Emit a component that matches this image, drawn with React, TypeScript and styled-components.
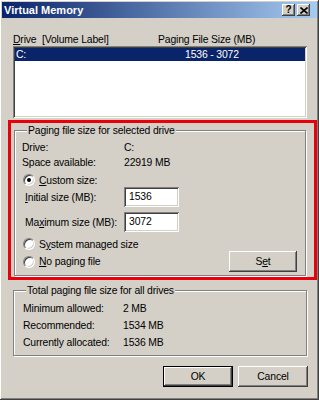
import { FC, ReactNode } from 'react';
import styled, { createGlobalStyle } from 'styled-components';

const GlobalStyle = createGlobalStyle`
  html, body {
    margin: 0;
    padding: 0;
    background: #d4d0c8;
  }
  * {
    box-sizing: border-box;
  }
`;

const face = '#d4d0c8';

const Window = styled.div`
  width: 319px;
  height: 400px;
  padding: 2px;
  background: ${face};
  font-family: 'Liberation Sans', Arial, sans-serif;
  font-size: 10.4px;
  letter-spacing: -0.15px;
  white-space: nowrap;
  color: #000;
  box-shadow: inset -1px -1px 0 #404040, inset 1px 1px 0 #ffffff,
    inset -2px -2px 0 #808080;
  display: flex;
  flex-direction: column;
  overflow: hidden;
`;

const TitleBar = styled.div`
  height: 16px;
  display: flex;
  align-items: center;
  padding: 0 7px 0 2px;
  background: linear-gradient(to right, #0a246a, #a6caf0);
`;

const Title = styled.div`
  flex: 1;
  color: #fff;
  font-weight: bold;
  font-size: 11px;
  letter-spacing: 0;
`;

const CaptionButtons = styled.div`
  display: flex;
  gap: 2px;
`;

const CaptionButton = styled.div`
  width: 13px;
  height: 12px;
  background: ${face};
  box-shadow: inset -1px -1px 0 #404040, inset 1px 1px 0 #ffffff,
    inset -2px -2px 0 #808080;
  display: flex;
  align-items: center;
  justify-content: center;
  font-weight: bold;
  font-size: 10px;
  line-height: 1;
`;

const Body = styled.div`
  padding: 16px 10px 0 11px;
  display: flex;
  flex-direction: column;
`;

const HeaderRow = styled.div`
  display: grid;
  grid-template-columns: 145px 1fr;
  height: 12px;
  line-height: 12px;
`;

const ListBox = styled.div`
  height: 72px;
  background: #fff;
  padding: 2px;
  box-shadow: inset 1px 1px 0 #808080, inset -1px -1px 0 #ffffff,
    inset 2px 2px 0 #404040, inset -2px -2px 0 ${face};
`;

const ListRow = styled.div<{ selected?: boolean }>`
  display: grid;
  grid-template-columns: 143px 1fr;
  height: 13px;
  line-height: 13px;
  padding-left: 1px;
  background: ${p => (p.selected ? '#0a246a' : 'transparent')};
  color: ${p => (p.selected ? '#fff' : '#000')};
`;

const ListValue = styled.span`
  padding-left: 26px;
`;

const Highlight = styled.div`
  margin: 2px -10px 0 -5px;
  height: 160px;
  border: 3px solid #e8000a;
  padding: 1px 8px 0 3px;
`;

const Group = styled.fieldset<{ height: number }>`
  margin: 0;
  height: ${p => p.height}px;
  border: 1px solid #808080;
  box-shadow: inset 1px 1px 0 #ffffff, 1px 1px 0 #ffffff;
  padding: 3px 7px 0 7px;
  min-width: 0;
`;

const Legend = styled.legend`
  padding: 0 1px;
  margin-left: 5px;
  height: 13px;
  line-height: 13px;
  background: ${face};
`;

const InfoRow = styled.div<{ h: number; indent?: number }>`
  display: grid;
  grid-template-columns: ${p => 102 - (p.indent || 0)}px 1fr;
  align-items: center;
  height: ${p => p.h}px;
  padding-left: ${p => p.indent || 0}px;
`;

const RadioRow = styled.label<{ top: number }>`
  display: flex;
  align-items: center;
  gap: 4px;
  height: 14px;
  margin-top: ${p => p.top}px;
  padding-left: 1px;
`;

const RadioCircle = styled.span<{ checked?: boolean }>`
  position: relative;
  width: 12px;
  height: 12px;
  border-radius: 50%;
  background: #fff;
  border: 1px solid;
  border-color: #808080 #ffffff #ffffff #808080;
  box-shadow: inset 1px 1px 0 #404040, inset -1px -1px 0 ${face};
  &::after {
    content: '';
    display: ${p => (p.checked ? 'block' : 'none')};
    position: absolute;
    left: 3px;
    top: 3px;
    width: 4px;
    height: 4px;
    border-radius: 50%;
    background: #000;
  }
`;

const FieldRow = styled.div<{ top: number }>`
  display: grid;
  grid-template-columns: 99px 55px;
  align-items: center;
  height: 20px;
  margin-top: ${p => p.top}px;
  padding-left: 3px;
`;

const TextInput = styled.div`
  height: 20px;
  background: #fff;
  padding: 0 5px;
  line-height: 20px;
  box-shadow: inset 1px 1px 0 #808080, inset -1px -1px 0 #ffffff,
    inset 2px 2px 0 #404040, inset -2px -2px 0 ${face};
`;

const BottomRow = styled.div`
  display: flex;
  align-items: center;
  justify-content: space-between;
  height: 21px;
  margin-top: 0;
  padding-right: 1px;
`;

const Button = styled.div<{ isDefault?: boolean; w?: number }>`
  width: ${p => p.w || 68}px;
  height: 21px;
  display: flex;
  align-items: center;
  justify-content: center;
  background: ${face};
  box-shadow: ${p =>
    p.isDefault
      ? `inset 0 0 0 1px #000, inset -2px -2px 0 #404040, inset 2px 2px 0 #ffffff, inset -3px -3px 0 #808080`
      : `inset -1px -1px 0 #404040, inset 1px 1px 0 #ffffff, inset -2px -2px 0 #808080`};
`;

const Buttons = styled.div`
  display: flex;
  justify-content: flex-end;
  gap: 5px;
  margin: 10px -1px 0 0;
`;

const U = styled.span`
  text-decoration: underline;
  text-underline-offset: 1px;
`;

const Radio: FC<{ checked?: boolean; top: number; children: ReactNode }> = props => (
  <RadioRow top={props.top}>
    <RadioCircle checked={props.checked} />
    <span>{props.children}</span>
  </RadioRow>
);

const totals = [
  { label: 'Minimum allowed:', value: '2 MB' },
  { label: 'Recommended:', value: '1534 MB' },
  { label: 'Currently allocated:', value: '1536 MB' },
];

const App: FC = () => {
  return (
    <>
      <GlobalStyle />
      <Window>
        <TitleBar>
          <Title>Virtual Memory</Title>
          <CaptionButtons>
            <CaptionButton>?</CaptionButton>
            <CaptionButton>
              <svg width="8" height="7" viewBox="0 0 8 7">
                <path d="M0.5 0.5 L7.5 6.5 M7.5 0.5 L0.5 6.5" stroke="#000" strokeWidth="1.6" />
              </svg>
            </CaptionButton>
          </CaptionButtons>
        </TitleBar>
        <Body>
          <HeaderRow>
            <span>
              <U>D</U>rive&nbsp; [Volume Label]
            </span>
            <span>Paging File Size (MB)</span>
          </HeaderRow>
          <ListBox>
            <ListRow selected>
              <span>C:</span>
              <ListValue>1536 - 3072</ListValue>
            </ListRow>
          </ListBox>
          <Highlight>
            <Group height={152}>
              <Legend>Paging file size for selected drive</Legend>
              <InfoRow h={15}>
                <span>Drive:</span>
                <span>C:</span>
              </InfoRow>
              <InfoRow h={15}>
                <span>Space available:</span>
                <span>22919 MB</span>
              </InfoRow>
              <Radio checked top={3}>
                <U>C</U>ustom size:
              </Radio>
              <FieldRow top={0}>
                <span>
                  <U>I</U>nitial size (MB):
                </span>
                <TextInput>1536</TextInput>
              </FieldRow>
              <FieldRow top={5}>
                <span>
                  Ma<U>x</U>imum size (MB):
                </span>
                <TextInput>3072</TextInput>
              </FieldRow>
              <Radio top={5}>
                S<U>y</U>stem managed size
              </Radio>
              <BottomRow>
                <RadioRow top={0}>
                  <RadioCircle />
                  <span>
                    <U>N</U>o paging file
                  </span>
                </RadioRow>
                <Button>
                  S<U>e</U>t
                </Button>
              </BottomRow>
            </Group>
          </Highlight>
          <Group height={72} style={{ marginTop: 4 }}>
            <Legend>Total paging file size for all drives</Legend>
            {totals.map((t, i) => (
              <InfoRow h={17} indent={2} key={i.toString() + t.label}>
                <span>{t.label}</span>
                <span>{t.value}</span>
              </InfoRow>
            ))}
          </Group>
          <Buttons>
            <Button isDefault w={70}>
              OK
            </Button>
            <Button w={70}>Cancel</Button>
          </Buttons>
        </Body>
      </Window>
    </>
  );
};

export default App;
